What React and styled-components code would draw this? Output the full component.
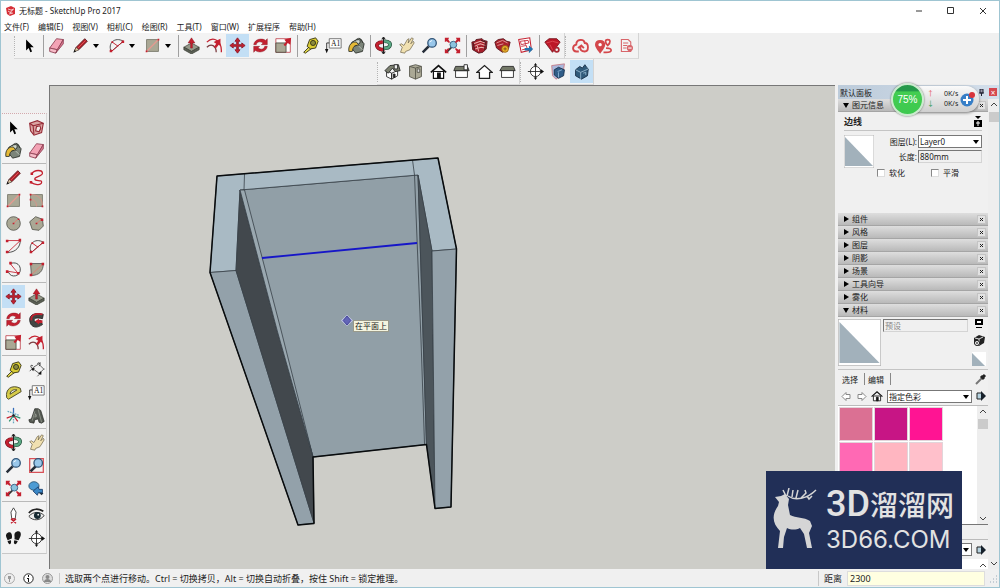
import React from "react";
import styled, { createGlobalStyle } from "styled-components";

const GlobalStyle = createGlobalStyle`
  * { box-sizing: border-box; }
  body { margin: 0; }
  body, button, input, select {
    font-family: "Noto Sans", "Noto Sans CJK SC", sans-serif;
    font-size: 8px;
    color: #222;
  }
  button { padding: 0; border: 0; background: none; }
`;

const Window = styled.div`
  display: flex;
  flex-direction: column;
  height: 100vh;
  overflow: hidden;
  background: #f0f0f0;
  border: 1px solid #9fc5d2;
`;

const TitleBar = styled.header`
  display: flex;
  align-items: center;
  height: 19px;
  padding-left: 5px;
  gap: 4px;
  background: #fff;
`;

const Title = styled.h1`
  flex: 1;
  margin: 0;
  font-size: 8px;
  font-weight: 400;
`;

const WindowButtons = styled.div`
  display: flex;
`;

const WindowButton = styled.button`
  display: flex;
  align-items: center;
  justify-content: center;
  width: 32px;
  height: 19px;
`;

const MenuBar = styled.nav`
  display: flex;
  align-items: center;
  gap: 9px;
  height: 13px;
  padding-left: 3px;
  background: #fff;
`;

const MenuItem = styled.button`
  line-height: 12px;
  white-space: nowrap;
`;

const ToolbarRow = styled.div`
  display: flex;
  height: 26px;
  padding-left: ${(p) => p.$indent}px;
`;

const Toolbar = styled.div`
  display: flex;
  align-items: center;
  background: #f3f3f3;
  border-right: 1px solid #d4d4d4;
  border-bottom: 1px solid #dadada;
`;

const Grip = styled.span`
  width: 4px;
  height: 20px;
  border-left: 1px dotted #b4b4b4;
`;

const Separator = styled.span`
  width: 1px;
  height: 22px;
  margin: 0 1px 0 2px;
  background: #a0a0a0;
`;

const ToolButton = styled.button`
  display: flex;
  align-items: center;
  justify-content: center;
  width: ${(p) => p.$width || 23}px;
  height: 23px;
  background: ${(p) => (p.$active ? "#c3dff5" : "transparent")};
`;

const DropButton = styled.button`
  display: flex;
  align-items: center;
  width: 11px;
  height: 23px;
`;

const Workspace = styled.div`
  display: flex;
  flex: 1;
  min-height: 0;
`;

const Palette = styled.aside`
  width: 48px;
  padding: 28px 2px 0 1px;
`;

const PaletteBody = styled.div`
  border-top: 1px dotted #d3a9ad;
  border-bottom: 1px solid #c8c8c8;
  border-right: 1px solid #d8d8d8;
  padding: 2px 0 3px;
  background: #f3f3f3;
`;

const PaletteGroup = styled.div`
  display: grid;
  grid-template-columns: 23px 23px;
  & + & {
    margin-top: 1px;
    padding-top: 2px;
    border-top: 1px solid #b9b9b9;
  }
`;

const Canvas = styled.main`
  position: relative;
  flex: 1;
  min-width: 0;
  overflow: hidden;
  background: #cdcdc8;
  border-top: 1px solid #777;
  border-left: 1px solid #777;
  svg { display: block; }
`;

const Inference = styled.span`
  position: absolute;
  left: 303px;
  top: 234px;
  padding: 0 1px;
  line-height: 10px;
  background: #f4f4df;
  border: 1px solid #99998a;
`;

const Tray = styled.aside`
  position: relative;
  display: flex;
  flex-direction: column;
  width: 164px;
  padding-left: 3px;
`;

const TrayTitle = styled.div`
  display: flex;
  align-items: center;
  height: 14px;
  padding: 0 2px;
  background: linear-gradient(90deg, #bccbda, #d4dfeb);
  span { flex: 1; }
`;

const CloseTray = styled.button`
  width: 8px;
  height: 8px;
  margin-left: 5px;
  line-height: 7px;
  color: #fff;
  background: #d5484f;
`;

const TrayBody = styled.div`
  display: flex;
  flex: 1;
  min-height: 0;
`;

const Sections = styled.div`
  display: flex;
  flex-direction: column;
  flex: 1;
  min-width: 0;
`;

const SectionHead = styled.div`
  display: flex;
  align-items: center;
  height: 13px;
  flex: none;
  padding: 0 2px 0 5px;
  background: linear-gradient(#dedede, #b9b9b9);
  border-bottom: 1px solid #a5a5a5;
`;

const SectionToggle = styled.button`
  display: flex;
  align-items: center;
  gap: 3px;
  flex: 1;
  line-height: 12px;
`;

const CloseSection = styled.button`
  display: flex;
  align-items: center;
  justify-content: center;
  width: 9px;
  height: 9px;
  background: #e2e2e2;
  border: 1px solid #c4c4c4;
`;

const ScrollBar = styled.div`
  display: flex;
  flex-direction: column;
  align-items: center;
  flex: none;
  width: 11px;
  padding: 4px 0;
  background: #eee;
`;

const Thumb = styled.span`
  width: 10px;
  height: 10px;
  margin: 5px 0 auto;
  background: #cbcbcb;
`;

const EntityInfo = styled.section`
  height: 101px;
  flex: none;
  padding: 0 6px;
`;

const EntityTitle = styled.div`
  display: flex;
  align-items: center;
  justify-content: space-between;
  height: 19px;
  border-bottom: 1px solid #c4c4c4;
  h2 { margin: 0; font-size: 9px; }
`;

const EntityForm = styled.div`
  display: flex;
  align-items: flex-start;
  gap: 15px;
  height: 35px;
  padding-top: 4px;
`;

const Fields = styled.div`
  display: flex;
  flex-direction: column;
  gap: 2px;
  flex: 1;
`;

const Field = styled.label`
  display: flex;
  align-items: center;
  justify-content: flex-end;
  gap: 1px;
  height: 13px;
`;

const TextBox = styled.input`
  width: ${(p) => p.$width || "64px"};
  height: 13px;
  padding: 0 1px;
  background: #f0f0f0;
  border: 1px solid #d4d4d4;
  border-top-color: #777;
  border-left-color: #777;
  &::placeholder { color: #888; }
`;

const SelectWrap = styled.span`
  display: flex;
  position: relative;
  width: ${(p) => p.$width}px;
  svg {
    position: absolute;
    right: 3px;
    top: 5px;
    pointer-events: none;
  }
`;

const Select = styled.select`
  appearance: none;
  width: 100%;
  height: 13px;
  padding: 0 1px;
  line-height: 11px;
  background: #fff;
  border: 1px solid #777;
  border-radius: 0;
`;

const Checks = styled.div`
  display: flex;
  gap: 26px;
  padding: 1px 0 0 33px;
`;

const Check = styled.label`
  display: flex;
  align-items: center;
  gap: 4px;
  line-height: 12px;
  white-space: nowrap;
  input {
    appearance: none;
    width: 8px;
    height: 8px;
    margin: 0;
    background: #fff;
    border: 1px solid #888;
    border-right-color: #ddd;
    border-bottom-color: #ddd;
  }
`;

const MaterialTop = styled.div`
  display: flex;
  gap: 2px;
  padding: 2px 1px 3px 0;
  border-bottom: 1px solid #c4c4c4;
`;

const MaterialName = styled.div`
  flex: 1;
`;

const MaterialTools = styled.div`
  display: flex;
  flex-direction: column;
  align-items: center;
  justify-content: space-between;
  width: 17px;
  button { display: flex; }
`;

const Tabs = styled.div`
  display: flex;
  align-items: center;
  height: 18px;
  padding: 0 1px 0 1px;
`;

const Tab = styled.button`
  height: 12px;
  padding: 0 6px 0 3px;
  border-right: 1px solid #888;
  & + & { padding-left: 3px; }
`;

const TabPicker = styled.button`
  display: flex;
  margin-left: auto;
`;

const MaterialNav = styled.div`
  display: flex;
  align-items: center;
  gap: 4px;
  height: 16px;
  padding: 0 1px 0 3px;
  button { display: flex; }
`;

const SwatchArea = styled.div`
  display: flex;
  height: 120px;
  flex: none;
  margin-top: 1px;
  background: #fff;
  border-top: 1px solid #bbb;
  border-bottom: 1px solid #777;
`;

const SwatchGrid = styled.div`
  display: grid;
  grid-template-columns: repeat(3, 34px);
  grid-auto-rows: 34px;
  gap: 1px;
  align-content: start;
  flex: 1;
  padding: 1px;
  overflow: hidden;
`;

const Swatch = styled.button`
  background: ${(p) => p.$color};
  border: 1px solid #e2d5da;
`;

const SecondPane = styled.div`
  display: flex;
  align-items: center;
  justify-content: flex-end;
  gap: 4px;
  height: 20px;
  flex: none;
  margin-top: 14px;
  padding-right: 1px;
  border-top: 1px solid #bbb;
`;

const SecondList = styled.div`
  display: flex;
  justify-content: flex-end;
  flex: 1;
  min-height: 0;
  padding: 5px 2px;
  background: #fff;
`;

const StatusBar = styled.footer`
  display: flex;
  align-items: center;
  height: 18px;
  padding-left: 3px;
  font-size: 9px;
  white-space: nowrap;
`;

const StatusIcons = styled.div`
  display: flex;
  gap: 8px;
  padding-right: 6px;
  margin-right: 5px;
  border-right: 1px solid #c8c8c8;
`;

const StatusText = styled.span`
  flex: 1;
`;

const Measure = styled.label`
  display: flex;
  align-items: center;
  gap: 5px;
  padding-left: 5px;
  border-left: 1px solid #c8c8c8;
  input {
    width: 138px;
    height: 15px;
    padding: 0 2px;
    background: #ffffe1;
    border: 1px solid #ddd;
    font-size: 9px;
  }
`;

const Monitor = styled.div`
  position: absolute;
  top: -3px;
  left: 58px;
  display: flex;
  align-items: center;
  width: 86px;
  height: 34px;
`;

const MonitorBody = styled.div`
  display: flex;
  align-items: center;
  justify-content: flex-end;
  gap: 2px;
  width: 100%;
  height: 26px;
  padding-right: 3px;
  background: linear-gradient(#fafafa, #cfcfcf);
  border-radius: 13px;
  box-shadow: 0 1px 3px #777;
  font-size: 7px;
  line-height: 10px;
`;

const Speeds = styled.div`
  display: grid;
  grid-template-columns: 17px 14px;
  white-space: nowrap;
`;

const Arrow = styled.span`
  color: ${(p) => p.$color};
`;

const Percent = styled.strong`
  position: absolute;
  left: -2px;
  display: flex;
  align-items: center;
  justify-content: center;
  width: 33px;
  height: 33px;
  color: #fff;
  font: 10px "Liberation Sans", sans-serif;
  background: linear-gradient(#259a4a 20%, #43cd51 24%, #3dc94f);
  border: 2px solid #ccebcf;
  border-radius: 50%;
  box-shadow: 0 0 2px #555;
`;

const Watermark = styled.div`
  position: absolute;
  right: 38px;
  bottom: 19px;
  display: flex;
  align-items: center;
  gap: 7px;
  width: 196px;
  height: 98px;
  padding: 0 6px;
  color: #e2e2e2;
  background: #212f57;
`;

const Brand = styled.div`
  display: flex;
  flex-direction: column;
  gap: 6px;
  white-space: nowrap;
`;

const BrandName = styled.div`
  display: flex;
  align-items: center;
  height: 34px;
  font: 500 28px "Noto Sans CJK SC", sans-serif;
  line-height: 34px;
  b { font: 500 36px Roboto, sans-serif; line-height: 34px; }
`;

const BrandSite = styled.div`
  font: 24px Inter, sans-serif;
  line-height: 26px;
`;

const RED = "#c4202f";
const TAN = "#aaa895";

const art = {
  select: <path d="M6 3v13l3-3 2 5 2-1-2-5h4z" fill="#000" />,
  eraser: (
    <g stroke="#8d3f52" strokeLinejoin="round">
      <path d="M2 13 10 2l8 1-7 12z" fill="#f3a3b5" />
      <path d="M2 13v4l7 2 2-4z" fill="#f7bcc8" />
      <path d="m11 15-2 4 9-11V3z" fill="#d97890" />
    </g>
  ),
  pencil: (
    <g>
      <path d="M3 16 5 12 15 2l3 3L8 15z" fill="#b3202b" stroke="#541014" />
      <path d="m2 18 3-6 3 3z" fill="#dcc6a0" stroke="#333" strokeWidth=".6" />
      <path d="m2 18 1-3 2 2z" fill="#111" />
      <path d="m7 13 9-9" stroke="#e25b5c" />
    </g>
  ),
  freehand: (
    <g fill="none" stroke={RED} strokeWidth="1.5">
      <path d="M4 6c4-6 13-5 13-1S7 9 8 12s9 0 8 4-9 2-12 0" />
      <path d="M3 4h3v3H3zM2 14h3v3H2z" fill={RED} stroke="none" />
    </g>
  ),
  arc: (
    <g fill="none" strokeWidth="1.1">
      <path d="M4 17C-1 8 8-1 18 5z" stroke="#444" />
      <path d="M4 17 18 5M5 6l7 5" stroke={RED} />
      <path d="M2 15h3v3H2zM16 4h3v3h-3zM4 5h2v2H4z" fill={RED} />
    </g>
  ),
  arc2: (
    <g fill="none">
      <path d="M3 17C13 17 18 10 18 3" stroke="#333" />
      <path d="M3 3h15L3 17" stroke={RED} />
      <path d="M1 2h3v3H1zM16 1h3v3h-3zM1 15h3v3H1z" fill={RED} />
    </g>
  ),
  arc3: (
    <g fill="none">
      <path d="M4 13c3 8 15 5 14-4-1-6-6-8-12-6" stroke="#333" />
      <path d="m6 3 9 11-12-2" stroke={RED} />
      <path d="M5 1h3v3H5zM1 11h3v3H1zM14 13h3v3h-3z" fill={RED} />
    </g>
  ),
  pie: (
    <g>
      <path d="M3 3h15C18 12 13 17 4 17z" fill={TAN} stroke="#555" />
      <path d="M3 17 18 3" stroke="#e27c73" />
      <path d="M2 2h3v3H2zM16 2h3v3h-3zM2 15h3v3H2z" fill={RED} />
    </g>
  ),
  rectangle: (
    <g>
      <path d="M3 3h14v14H3z" fill={TAN} stroke="#77776a" />
      <path d="M3 17 17 3" stroke="#e59a90" strokeWidth="1.5" />
      <path d="M2 16h2v2H2zM16 2h2v2h-2z" fill={RED} />
    </g>
  ),
  rotated: (
    <g>
      <path d="M3 3h14v14H3z" fill={TAN} stroke="#77776a" />
      <path d="M3 3c9 0 14 5 14 13M3 9c5 0 7 3 7 8" fill="none" stroke="#de9188" />
      <path d="M2 2h2v2H2zM2 8h2v2H2zM16 16h2v2h-2z" fill={RED} />
    </g>
  ),
  circle: (
    <g>
      <circle cx="10" cy="10" r="8" fill={TAN} stroke="#57574f" />
      <path d="m10 10 5-5" stroke="#e27c73" />
      <path d="M9 9h2v2H9zM15 4h2v2h-2z" fill={RED} />
    </g>
  ),
  polygon: (
    <g>
      <path d="m2 8 7-6 8 3 1 8-5 5-8-1z" fill={TAN} stroke="#57574f" />
      <path d="m10 10 6-5" stroke="#e27c73" />
      <path d="M9 9h2v2H9zM15 4h3v3h-3z" fill={RED} />
    </g>
  ),
  push: (
    <g stroke="#383b32" strokeWidth=".8">
      <path d="m1 12 9-5 9 5-9 5z" fill="#96998a" />
      <path d="m1 12 9 5 9-5v3l-9 5-9-5z" fill="#5b6055" />
      <path d="M9 13V7H6l4-6 4 6h-3v6z" fill={RED} stroke="#8d1520" strokeWidth=".6" />
    </g>
  ),
  offset: (
    <g fill="none" strokeWidth="1.5">
      <path d="M1 6c8-8 18-1 17 12" stroke={RED} />
      <path d="M1 12c5-5 11-2 11 6" stroke="#7d3d42" />
      <path d="m9 12 3-4-3-2 8-4v9l-2-2-3 4z" fill={RED} stroke="none" />
    </g>
  ),
  move: (
    <path
      d="m10 1 3 4h-2v4h4V7l4 3-4 3v-2h-4v4h2l-3 4-3-4h2v-4H5v2l-4-3 4-3v2h4V5H7z"
      fill={RED}
      stroke="#8b1a26"
      strokeWidth="1"
    />
  ),
  rotate: (
    <g fill={RED} stroke="#851622" strokeWidth=".5">
      <path d="M2 9C3 2 12 1 16 4l2-2v7h-7l2-2C10 5 6 5 5 9z" />
      <path d="M18 11c-1 7-10 8-14 5l-2 2v-7h7l-2 2c3 2 7 2 8-2z" />
    </g>
  ),
  scale: (
    <g>
      <path d="M1 2h17v16H1z" fill="#fff" stroke="#bf4851" />
      <path d="M1 7h12v11H1z" fill={TAN} stroke="#4d4c42" />
      <path d="m10 9 3-3-2-3 8-2-1 8-3-2-3 4z" fill={RED} />
    </g>
  ),
  follow: (
    <g>
      <path d="M3 15C-1 5 7 1 18 4l-1 5C8 7 6 9 8 13l7-2 2 5c-6 4-11 4-14-1z" fill="#434543" stroke="#222" />
      <path d="M17 4C9 2 3 5 4 11" fill="none" stroke={RED} strokeWidth="2" />
      <path d="m8 12 5-3v2h4v3h-4v2z" fill={RED} />
    </g>
  ),
  tape: (
    <g stroke="#2d2b11">
      <path d="m2 18 7-7 3 2-8 6z" fill="#e4da4d" />
      <path d="m9 3 7-2 3 4-3 8-6 1-4-3z" fill="#d8cb34" />
      <circle cx="13" cy="7" r="3" fill="#8b8b3f" />
    </g>
  ),
  dimension: (
    <g stroke="#222" fill="none">
      <path d="m3 7 12 9M2 12l5-5M11 18l5-5M13 4l6 6M7 7l8-5M15 13l4-4" strokeWidth=".8" />
      <path d="M6 6c-2-2-4 0-2 1M11 3c2-2 5 0 2 3" />
      <path d="m4 9 4-1-2 4zM12 15l3-3 1 4z" fill="#111" stroke="none" />
    </g>
  ),
  protractor: (
    <g stroke="#39381c">
      <path d="M2 16C0 6 8 0 18 5l1 4L4 18z" fill="#d6cb49" />
      <path d="M6 12c0-4 4-6 8-5z" fill="#f1f1e7" />
    </g>
  ),
  paint: (
    <g stroke="#2c302b">
      <path d="m5 6 9-4 5 6-2 9-8 2-4-5z" fill="#7b8479" />
      <ellipse cx="9" cy="7" rx="6" ry="3" transform="rotate(-25 9 7)" fill="#d0d7cc" />
      <path d="M1 17C0 9 5 5 10 6l3 4c-6-1-7 2-8 7z" fill="#e6ba36" />
      <path d="M9 4c2-4 8-3 8 3" fill="none" />
      <path d="m12 10 5 5" stroke="#c2cabf" />
    </g>
  ),
  axes: (
    <g strokeWidth="1.5">
      <path d="M10 10V1" stroke="#356cb9" />
      <path d="m10 10-8 3M10 10l5 7" stroke={RED} />
      <path d="m10 10 8 3M10 10 5 17" stroke="#278c68" />
      <path d="m3 5 14 5M10 11v8" stroke="#67a8bf" strokeDasharray="2 1" />
      <circle cx="10" cy="10" r="1.500" fill="#222" />
    </g>
  ),
  solidText: (
    <g stroke="#242622" strokeWidth=".8">
      <path d="M8 2h4l3 2 4 13-3 2-3-1-1-4-4 1-1 4-5-1-1-3 3-1z" fill="#555a53" />
      <path d="m12 3 4 15M8 5l-3 11M9 8l1 3-2 1z" stroke="#a0a69c" />
    </g>
  ),
  orbit: (
    <g fill="none">
      <path d="M9 6C3 6 1 9 3 12s5 3 8 3" stroke="#6e141e" strokeWidth="4.400" />
      <path d="M9 6C3 6 1 9 3 12s5 3 8 3" stroke={RED} strokeWidth="3" />
      <path d="M11 5c6 0 8 3 6 6s-4 2-6 2" stroke="#244c3a" strokeWidth="4.400" />
      <path d="M11 5c6 0 8 3 6 6s-4 2-6 2" stroke="#5aa984" strokeWidth="3" />
      <path d="M10 1v18M8 3l2-3 2 3M8 17l2 3 2-3" stroke="#222" strokeWidth="1.200" />
    </g>
  ),
  pan: (
    <path
      d="m3 18 2-6-3-3 2-1 3 2 4-7 2-1-1 5 4-6 2 1-3 6 3-3 1 2-5 8-5 2-1 2z"
      fill="#f0e0b0"
      stroke="#6a6045"
      strokeWidth=".8"
    />
  ),
  zoom: (
    <g>
      <path d="m2 18 7-7" stroke="#252d37" strokeWidth="3" />
      <circle cx="13" cy="7" r="5" fill="#99c7ea" stroke="#315578" strokeWidth="1.5" />
      <path d="m10 6 3-2" stroke="#fff" />
    </g>
  ),
  zoomWindow: (
    <g>
      <path d="M2 2h16v16H2z" fill="none" stroke="#d75158" strokeWidth="1.5" />
      <path d="m3 17 7-7" stroke="#252d37" strokeWidth="3" />
      <circle cx="12" cy="7" r="5" fill="#99c7ea" stroke="#315578" strokeWidth="1.5" />
    </g>
  ),
  extents: (
    <g>
      <path d="m3 18 6-6" stroke="#333" strokeWidth="2" />
      <circle cx="11" cy="9" r="4" fill="#8cc3de" stroke="#315578" />
      <path d="M1 1h5L5 3l2 3-1 1-3-2-2 1zM19 1h-5l1 2-2 3 1 1 3-2 2 1zM1 19v-5l2 1 2-2 1 1-2 3 2 2zM19 19h-5l1-2-2-3 1-1 3 2 2-1z" fill={RED} />
    </g>
  ),
  previous: (
    <g>
      <path d="m9 9 8 8" stroke="#202e3b" strokeWidth="3" />
      <ellipse cx="7" cy="7" rx="6" ry="5" fill="#4c9bd4" stroke="#295471" />
      <path d="m6 13 6-5 1 3h4v4h-5l-1 3z" fill="#3b87c5" stroke="#1b3d6a" />
    </g>
  ),
  model: (
    <g>
      <path d="m1 6 4-1 1-2 7-1 2 2 4 1-1 9-4 4-5 1-7-4z" fill="#a61f2b" stroke="#4f151c" />
      <path d="m3 8 8-3 6 2M4 11l7-3 6 2M5 14l7-2 4 1M7 9l2 8" stroke="#efb1ac" strokeWidth="1.200" />
      <path d="m12 4 5 2-1 9M3 7l1 8" stroke="#321316" />
    </g>
  ),
  share: (
    <g>
      <path d="m1 6 4-3 6-1 4 3 4 1-2 8-7 4-7-5z" fill="#aa202b" stroke="#561219" />
      <path d="m3 7 7-3 6 3M4 10l7-2" stroke="#e6aaa4" />
      <circle cx="13" cy="14" r="4" fill="#f1b12b" stroke="#8c6114" />
      <path d="M11 14h4M13 12v4" stroke="#744f11" />
    </g>
  ),
  layout: (
    <g>
      <path d="m2 3 13-2 2 14-12 3z" fill="#fff" stroke={RED} strokeWidth="1.200" />
      <path d="m4 5 9-1 1 3-9 2zM5 11l6-1 1 4-6 1M9 4l1 5" stroke={RED} />
      <path d="M9 13h5v-3l5 4-5 5v-3H9z" fill="#2475ad" />
    </g>
  ),
  ruby: (
    <g>
      <path d="m1 6 5-4h9l4 4-9 12z" fill="#bd1728" stroke="#74101a" />
      <path d="m3 7 7-2 7 2M7 9l3 6" stroke="#df4f58" />
      <circle cx="15" cy="15" r="2.500" fill="#eee" stroke="#aa2632" strokeWidth="2" />
    </g>
  ),
  cloud: (
    <g fill="none" stroke="#d4474b" strokeWidth="2.200">
      <path d="M8 17H5c-5 0-5-7 0-8 0-7 9-7 10-2 5 0 5 10 0 10-4 0-6-2-5-6M7 13l4-3 3 3" />
    </g>
  ),
  pin: (
    <g fill="none" stroke="#d4474b" strokeWidth="2">
      <path d="M6 18C2 13 1 11 1 9c0-6 10-6 10 0 0 2-1 4-5 9z" fill="#d4474b" />
      <circle cx="6" cy="9" r="2" fill="#fff" stroke="none" />
      <path d="M15 10c-4-4-3-7 0-7s4 3 0 7zm-2 3c8 0 8 5 0 5h-3" />
    </g>
  ),
  sheet: (
    <g fill="none" stroke="#d8666b" strokeWidth="1.300">
      <path d="M4 3h8l3 3v11H4zM6 7h6M6 10h5M6 13h4" />
      <circle cx="14" cy="13" r="3" fill="#d8666b" />
      <path d="M12 13h4" stroke="#fff" />
    </g>
  ),
  component: (
    <g fill="none" stroke="#962a36" strokeWidth="1.300">
      <path d="m2 5 9-3 7 3-2 11-9 3-4-5z" fill="#dba4a2" />
      <path d="m2 5 4 3 12-3M6 8l1 10" />
      <path d="m10 9 4-1 1 3-2 4-4-1z" fill="#f3e9e7" />
    </g>
  ),
  iso: (
    <g stroke="#222">
      <path d="m3 9 6 3v7l-6-3zM9 12l7-3v6l-7 4z" fill="#fff" />
      <path d="m1 9 6-6 10-1 2 7-6 1-3-4-5 6z" fill="#7c8070" />
      <path d="M12 2h4v5h-4z" fill="#eee" />
      <path d="M11 13h2v4h-2z" fill="#222" />
    </g>
  ),
  top: (
    <g stroke="#515147">
      <path d="m3 4 7-2 7 2v12l-7 3-7-3z" fill={TAN} />
      <path d="M10 6v13M3 4l7 2 7-2" fill="none" />
      <path d="M12 7h3v4h-3z" fill="#ddd" />
    </g>
  ),
  front: (
    <g stroke="#111" strokeWidth="1.4" fill="#fff">
      <path d="M4 10h12v8H4z" /><path d="m1 11 9-8 9 8" fill="none" strokeWidth="2" />
      <path d="M9 12h3v6H9z" fill="#111" />
    </g>
  ),
  rightSide: (
    <g stroke="#222"><path d="M3 9h14v8H3z" fill="#fff" /><path d="m1 9 2-5h14l2 5z" fill="#747968" /><path d="M13 2h4v6h-4z" fill="#fff" /></g>
  ),
  back: <path d="M4 18v-7H1l9-8 9 8h-3v7z" fill="#fff" stroke="#222" strokeWidth="1.5" />,
  leftSide: (
    <g stroke="#222"><path d="M3 8h14v9H3z" fill="#fff" /><path d="m1 9 3-5h13l2 5z" fill="#747968" /></g>
  ),
  section: (
    <g stroke="#222" fill="none">
      <circle cx="10" cy="10" r="6" fill="#fff" /><path d="M1 10h18M10 1v18" />
      <path d="m8 3 2-3 2 3zM8 17l2 3 2-3zM16 7l4 3-4 3z" fill="#111" stroke="none" />
    </g>
  ),
  cutPlane: (
    <g><path d="M2 3 17 1l-2 13-8 5-4-4z" fill="#aab8dc" stroke="#c87982" /><path d="m5 8 5-3 7 3-1 7-6 3-5-4z" fill="#315d88" stroke="#172f49" /><path d="m9 10 5-2M10 11v6" stroke="#92b9d8" /></g>
  ),
  cut: (
    <g><path d="m3 8 5-4 3 2 3-4 2 3 2 2-1 8-7 4-7-4z" fill="#315b7b" stroke="#162c43" /><path d="m3 8 6 3 9-4M9 11v8M12 12l3-1v3" stroke="#9abbd1" fill="none" /></g>
  ),
  camera: (
    <g><path d="m10 1 3 5-1 8H8L7 6z" fill="#fff" stroke="#333" /><path d="m7 14 6 5M13 14l-6 5M8 14h4" fill="none" stroke={RED} strokeWidth="1.5" /></g>
  ),
  look: (
    <g><path d="M1 11c5-6 13-6 18-1-4 6-13 7-18 1z" fill="#eee" stroke="#222" /><circle cx="11" cy="10" r="4" fill="#172a32" /><circle cx="12" cy="9" r="1" fill="#fff" /><path d="M1 7c5-6 12-5 17-2" fill="none" stroke="#222" strokeWidth="2" /></g>
  ),
  walk: (
    <g fill="#171717"><path d="M2 4c5-4 7 1 6 6l-5 2C2 9 0 7 2 4zM3 13l4-1c1 6-3 6-4 1zM12 3c5-4 8 0 6 5l-2 4-5-1c1-3-1-5 1-8zM11 12l4 1c-2 6-6 4-4-1z" /></g>
  ),
  label: (
    <g>
      <path d="M5 2h14v11H5z" fill="#fff" stroke="#666" />
      <path d="M5 7H2v8" stroke="#222" />
      <path d="m0 14 2 5 2-5z" fill="#111" />
      <text x="7" y="11" fontSize="9" fontFamily="Liberation Serif" fill="#111">A1</text>
    </g>
  ),
};

const Icon = ({ name, size = 17 }) => (
  <svg width={size} height={size} viewBox="0 0 20 20" fill="none" aria-hidden="true">
    {art[name]}
  </svg>
);

const Down = ({ size = 6 }) => (
  <svg width={size} height={size / 2 + 1} viewBox="0 0 6 4"><path d="M0 0h6L3 4z" fill="#000" /></svg>
);

const Cross = () => (
  <svg width="5" height="5" viewBox="0 0 5 5"><path d="m1 1 3 3m0-3L1 4" stroke="#222" /></svg>
);

const Chevron = ({ up }) => (
  <svg width="6" height="4" viewBox="0 0 6 4"><path d={up ? "m0 3 3-3 3 3" : "m0 1 3 3 3-3"} fill="none" stroke="#444" /></svg>
);

const Diagonal = ({ width, height }) => (
  <svg width={width} height={height} viewBox="0 0 30 32" preserveAspectRatio="none">
    <path d="M0 0h30v32H0z" fill="#fff" />
    <path d="M1 2v28h28z" fill="#a2b1bb" />
    <path d="M0 0h30v32H0z" fill="none" stroke="#b5b5b5" />
  </svg>
);

const Exporter = () => (
  <svg width="11" height="10" viewBox="0 0 11 10"><path d="M1 2h5v6H1z" fill="#b6d2df" stroke="#222" /><path d="M5 0v10l5-5z" fill="#17212b" /></svg>
);

const menus = ["文件(F)", "编辑(E)", "视图(V)", "相机(C)", "绘图(R)", "工具(T)", "窗口(W)", "扩展程序", "帮助(H)"];

const mainTools = [
  ["push", "offset", "move", "rotate", "scale"],
  ["tape", "label", "paint"],
  ["orbit", "pan", "zoom", "extents"],
  ["model", "share", "layout"],
  ["ruby"],
];

const paletteTools = [
  ["select", "component", "paint", "eraser"],
  ["pencil", "freehand", "rectangle", "rotated", "circle", "polygon", "arc2", "arc", "arc3", "pie"],
  ["move", "push", "rotate", "follow", "scale", "offset"],
  ["tape", "dimension", "protractor", "label", "axes", "solidText"],
  ["orbit", "pan", "zoom", "zoomWindow", "extents", "previous"],
  ["camera", "look", "walk", "section"],
];

const closedSections = ["组件", "风格", "图层", "阴影", "场景", "工具向导", "雾化"];
const swatches = ["#db7093", "#c71585", "#ff1493", "#ff69b4", "#ffb6c1", "#ffc0cb"];

const Tool = ({ name, active, width }) => (
  <ToolButton aria-label={name} $active={active} $width={width}>
    <Icon name={name} />
  </ToolButton>
);

const Section = ({ title, open }) => (
  <SectionHead>
    <SectionToggle aria-expanded={!!open}>
      <svg width="6" height="6" viewBox="0 0 6 6"><path d={open ? "M0 1h6L3 6z" : "M1 0v6l5-3z"} fill="#000" /></svg>
      {title}
    </SectionToggle>
    <CloseSection aria-label="close"><Cross /></CloseSection>
  </SectionHead>
);

const Model = () => (
  <svg width="784" height="484" viewBox="50 86 784 484" strokeLinejoin="round">
    <g stroke="#374047" strokeWidth=".8">
      <path d="M240 190 418 175l8.500 269.500L313 457z" fill="#919fa7" />
      <path d="m217 176 221-18 18.500 91-24.500 2-14-76-178 15-4 80.500-26 2z" fill="#a9bac4" />
      <path d="m210 272.500 26-2L314 523l-16 2z" fill="#93a1aa" />
      <path d="m240 190-4 80.500L314 523l-1-66-36-127z" fill="#42484d" />
      <path d="m240 190 37 140 36 127-32-127-36.500-140z" fill="#9aa8b0" />
      <path d="m418 175 14 76 3 257-8.500-63.500z" fill="#4c555b" />
      <path d="m432 251 24.500-2L451 507l-16 1.500z" fill="#93a1aa" />
      <path d="m244.500 174-.5 16M412.500 160l2 15 6.500 165 3.500 104" fill="none" />
    </g>
    <path
      d="m217 176 221-18 18.500 91L451 507l-16 1.500-8.500-64L313 457l1 66.500-16 1.500-88-252.500z"
      fill="none"
      stroke="#080b0d"
      strokeWidth="1.500"
    />
    <path d="m262 258 155-15" stroke="#1616c8" strokeWidth="1.800" />
    <path d="m347 315 6 5.500-6 5.500-6-5.500z" fill="#c4c9ee" />
    <path d="m347 316 4 4.500-4 4.500-4-4.500z" fill="#6265b7" stroke="#27277f" strokeWidth=".7" />
  </svg>
);

const Deer = () => (
  <svg width="47" height="64" viewBox="0 0 47 64">
    <path
      d="m3 9 6-1 4-2 4 5-1 6 2 10c6 3 14 2 20 6l2 5-3 7 3 15h-5l-3-14-4-6c-4 2-9 2-13 0l-3 9-1 11H6l2-17C1 36-1 28 6 18l1-4z"
      fill="#d5d5d5"
    />
    <path
      d="m14 8-3-6M15 8l2-8M16 8c7 5 19 3 28-6M20 9l1-7M24 10l2-8M29 10l5-5-1-3M35 8l2 3 3-3"
      fill="none"
      stroke="#d5d5d5"
      strokeWidth="1.500"
    />
  </svg>
);

const App = () => (
  <>
    <GlobalStyle />
    <Window>
      <TitleBar>
        <svg width="9" height="10" viewBox="0 0 9 10">
          <path d="m0 2 5-2 4 2v6L4 10 1 8z" fill="#d62e36" />
          <path d="m2 3 3 1 3-1M2 5l3 2V5l2-1M3 8l4-1" fill="none" stroke="#fff" strokeWidth=".7" />
        </svg>
        <Title>无标题 - SketchUp Pro 2017</Title>
        <WindowButtons>
          <WindowButton aria-label="minimize"><svg width="8" height="8"><path d="M1 4h6" stroke="#333" /></svg></WindowButton>
          <WindowButton aria-label="maximize"><svg width="8" height="8"><path d="M.5 .5h6v6h-6z" fill="none" stroke="#333" /></svg></WindowButton>
          <WindowButton aria-label="close"><svg width="8" height="8"><path d="m1 1 6 6m0-6L1 7" stroke="#333" /></svg></WindowButton>
        </WindowButtons>
      </TitleBar>
      <MenuBar>
        {menus.map((menu) => <MenuItem key={menu}>{menu}</MenuItem>)}
      </MenuBar>

      <ToolbarRow $indent={13}>
        <Toolbar>
          <Grip />
          <Tool name="select" />
          <Separator />
          <Tool name="eraser" />
          {["pencil", "arc", "rectangle"].map((name) => (
            <React.Fragment key={name}>
              <Tool name={name} width={25} />
              <DropButton aria-label={`${name} options`}><Down /></DropButton>
            </React.Fragment>
          ))}
          {mainTools.map((group) => (
            <React.Fragment key={group[0]}>
              <Separator />
              {group.map((name) => <Tool key={name} name={name} active={name === "move"} />)}
            </React.Fragment>
          ))}
        </Toolbar>
        <Toolbar>
          <Grip />
          {["cloud", "pin", "sheet"].map((name) => <Tool key={name} name={name} width={23} />)}
        </Toolbar>
      </ToolbarRow>
      <ToolbarRow $indent={376}>
        <Toolbar>
          <Grip />
          {["iso", "top", "front", "rightSide", "back", "leftSide"].map((name) => <Tool key={name} name={name} />)}
        </Toolbar>
        <Toolbar>
          <Grip />
          {["section", "cutPlane", "cut"].map((name) => <Tool key={name} name={name} active={name === "cut"} />)}
        </Toolbar>
      </ToolbarRow>

      <Workspace>
        <Palette>
          <PaletteBody>
            {paletteTools.map((group) => (
              <PaletteGroup key={group[0]}>
                {group.map((name) => <Tool key={name} name={name} active={name === "move"} />)}
              </PaletteGroup>
            ))}
          </PaletteBody>
        </Palette>
        <Canvas>
          <Model />
          <Inference>在平面上</Inference>
        </Canvas>
        <Tray>
          <TrayTitle>
            <span>默认面板</span>
            <svg width="5" height="7" viewBox="0 0 5 7"><path d="M1 0h3v4H1zM0 4h5M2.500 4v3" stroke="#223" fill="#99a" /></svg>
            <CloseTray aria-label="close tray">×</CloseTray>
          </TrayTitle>
          <TrayBody>
            <Sections>
              <Section title="图元信息" open />
              <EntityInfo>
                <EntityTitle>
                  <h2>边线</h2>
                  <svg width="8" height="11" viewBox="0 0 8 11"><path d="M0 4h8v7H0zM1 0h6L4 3z" /><path d="M4 5v5M2 7h4" stroke="#fff" /></svg>
                </EntityTitle>
                <EntityForm>
                  <Diagonal width={30} height={33} />
                  <Fields>
                    <Field>
                      图层(L):
                      <SelectWrap $width={64}>
                        <Select defaultValue="Layer0"><option>Layer0</option></Select>
                        <Down />
                      </SelectWrap>
                    </Field>
                    <Field>长度:<TextBox readOnly value="880mm" /></Field>
                  </Fields>
                </EntityForm>
                <Checks>
                  <Check><input type="checkbox" />软化</Check>
                  <Check><input type="checkbox" />平滑</Check>
                </Checks>
              </EntityInfo>
              {closedSections.map((title) => <Section key={title} title={title} />)}
              <Section title="材料" open />
              <MaterialTop>
                <Diagonal width={43} height={47} />
                <MaterialName><TextBox $width="100%" aria-label="材料" placeholder="预设" /></MaterialName>
                <MaterialTools>
                  <button aria-label="pane"><svg width="8" height="9" viewBox="0 0 8 9"><path d="M0 0h8v6H0zM1 8h6v1H1z" /><path d="M2 2h4v2H2z" fill="#fff" /></svg></button>
                  <button aria-label="create"><svg width="12" height="12" viewBox="0 0 12 12"><path d="m1 4 5-3 6 2-1 6-5 3-5-3z" fill="#222" /><path d="m2 4 4 1 4-2M6 5v6" stroke="#ddd" fill="none" /><circle cx="4" cy="9" r="2.500" fill="#fff" stroke="#111" /><path d="M3 9h2M4 8v2" stroke="#111" strokeWidth=".7" /></svg></button>
                  <button aria-label="default"><svg width="14" height="14"><path d="M0 0h14v14H0z" fill="#fff" /><path d="M0 1v13h13z" fill="#a2b1bb" /></svg></button>
                </MaterialTools>
              </MaterialTop>
              <Tabs>
                <Tab>选择</Tab>
                <Tab>编辑</Tab>
                <TabPicker aria-label="sample"><svg width="12" height="12" viewBox="0 0 12 12"><path d="m1 11 6-6" stroke="#777" strokeWidth="2" /><path d="m6 3 3 3M7 5l3-3" stroke="#222" strokeWidth="3" /></svg></TabPicker>
              </Tabs>
              <MaterialNav>
                <button aria-label="back"><svg width="11" height="9" viewBox="0 0 11 9"><path d="m1 4.500 4-4v2h4v4H5v2z" fill="#fff" stroke="#888" /></svg></button>
                <button aria-label="forward"><svg width="11" height="9" viewBox="0 0 11 9"><path d="m10 4.500-4-4v2H2v4h4v2z" fill="#fff" stroke="#888" /></svg></button>
                <button aria-label="home"><Icon name="front" size={12} /></button>
                <SelectWrap $width={86}>
                  <Select aria-label="library" defaultValue="指定色彩"><option>指定色彩</option></Select>
                  <Down />
                </SelectWrap>
                <button aria-label="details"><Exporter /></button>
              </MaterialNav>
              <SwatchArea>
                <SwatchGrid>
                  {swatches.map((color) => <Swatch key={color} $color={color} aria-label={color} />)}
                </SwatchGrid>
                <ScrollBar><Chevron up /><Thumb /><Chevron /></ScrollBar>
              </SwatchArea>
              <SecondPane>
                <SelectWrap $width={86}>
                  <Select aria-label="second library"><option></option></Select>
                  <Down />
                </SelectWrap>
                <Exporter />
              </SecondPane>
              <SecondList><Chevron up /></SecondList>
            </Sections>
            <ScrollBar><Chevron up /><Thumb /><Chevron /></ScrollBar>
          </TrayBody>
          <Monitor>
            <MonitorBody>
              <Speeds>
                <Arrow $color="#e5544f">↑</Arrow><span>0K/s</span>
                <Arrow $color="#2d9b55">↓</Arrow><span>0K/s</span>
              </Speeds>
              <svg width="16" height="18" viewBox="0 0 16 18">
                <circle cx="7" cy="10" r="6.500" fill="#377fc7" />
                <path d="M3 10h8M7 6v8" stroke="#fff" strokeWidth="2" />
                <circle cx="12" cy="5" r="3" fill="#d8343b" />
              </svg>
            </MonitorBody>
            <Percent>75%</Percent>
          </Monitor>
        </Tray>
      </Workspace>

      <StatusBar>
        <StatusIcons>
          <svg width="11" height="11" viewBox="0 0 11 11"><circle cx="5.500" cy="5.500" r="5" fill="#eee" stroke="#aaa" /><path d="M4 3h3v3H4zM5 6h1v3H5z" fill="#999" /></svg>
          <svg width="11" height="11" viewBox="0 0 11 11"><circle cx="5.500" cy="5.500" r="4.700" fill="#fff" stroke="#222" /><path d="M5 2h1v2H5zM4 5h2v4H5V6H4z" fill="#111" /></svg>
          <svg width="11" height="11" viewBox="0 0 11 11"><circle cx="5.500" cy="5.500" r="5" fill="#ddd" stroke="#999" /><circle cx="5.500" cy="4" r="2" fill="#888" /><path d="M2 9c0-4 7-4 7 0z" fill="#888" /></svg>
        </StatusIcons>
        <StatusText>选取两个点进行移动。Ctrl = 切换拷贝，Alt = 切换自动折叠，按住 Shift = 锁定推理。</StatusText>
        <Measure>距离<input defaultValue="2300" /></Measure>
        <svg width="14" height="14" viewBox="0 0 14 14"><path d="M11 5h1M8 8h1M11 8h1M5 11h1M8 11h1M11 11h1" stroke="#9ab" /></svg>
      </StatusBar>
      <Watermark>
        <Deer />
        <Brand>
          <BrandName><b>3D</b>溜溜网</BrandName>
          <BrandSite>3D66.COM</BrandSite>
        </Brand>
      </Watermark>
    </Window>
  </>
);

export default App;
